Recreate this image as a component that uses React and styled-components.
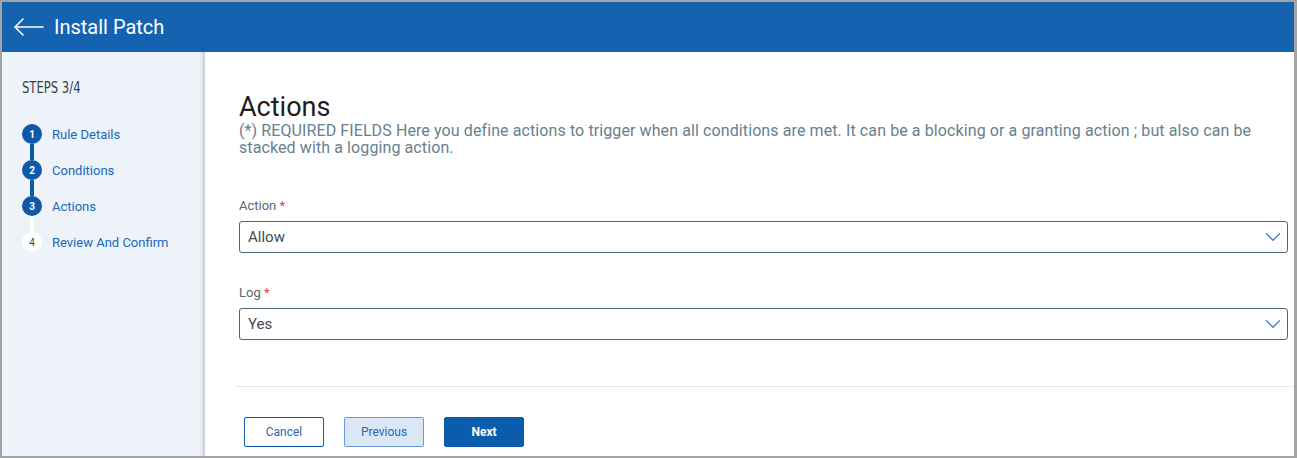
import React from 'react';
import styled, { createGlobalStyle } from 'styled-components';
import { ChevronDown } from 'lucide-react';

const GlobalStyle = createGlobalStyle`
  body {
    margin: 0;
    font-family: Roboto, "Liberation Sans", sans-serif;
    background: #ffffff;
  }
  * { box-sizing: border-box; }
`;

// Styled Components
const Frame = styled.div`
  width: 1297px;
  height: 458px;
  border: 2px solid #a3a3a3;
  border-right-width: 3px;
  display: flex;
  flex-direction: column;
  overflow: hidden;
`;

const Header = styled.header`
  height: 50px;
  flex-shrink: 0;
  background-color: #1562b0;
  display: flex;
  align-items: center;
  padding-left: 11px;
  gap: 9px;
  color: #ffffff;
`;

const BackButton = styled.button`
  border: none;
  background: none;
  padding: 0;
  display: flex;
  color: #ffffff;
  cursor: pointer;
`;

const HeaderTitle = styled.h1`
  margin: 0;
  font-size: 20px;
  font-weight: 400;
`;

const Body = styled.div`
  flex: 1;
  display: flex;
  min-height: 0;
`;

const Sidebar = styled.aside`
  width: 203px;
  flex-shrink: 0;
  background-color: #eef3fa;
  box-shadow: inset -5px 0 4px -3px rgba(0, 0, 0, 0.18);
  padding: 27px 0 0 20px;
`;

const StepsTitle = styled.div`
  font-family: "DejaVu Sans Condensed", Roboto, sans-serif;
  font-stretch: condensed;
  font-size: 15px;
  color: #3a3f44;
  transform: scaleX(0.86);
  transform-origin: left center;
  margin-bottom: 27px;
`;

const StepList = styled.ol`
  list-style: none;
  margin: 0;
  padding: 0;
  display: flex;
  flex-direction: column;
  gap: 16px;
`;

const StepItem = styled.li`
  display: flex;
  align-items: center;
  gap: 10px;
  height: 20px;
`;

const StepCircle = styled.span`
  position: relative;
  width: 20px;
  height: 20px;
  border-radius: 50%;
  background-color: ${(p) => (p.$done ? '#0e5aa8' : '#ffffff')};
  color: ${(p) => (p.$done ? '#ffffff' : '#444444')};
  font-size: 10px;
  font-weight: ${(p) => (p.$done ? 700 : 400)};
  display: flex;
  align-items: center;
  justify-content: center;
  flex-shrink: 0;

  &::after {
    content: '';
    display: ${(p) => (p.$last ? 'none' : 'block')};
    position: absolute;
    top: 20px;
    left: 8px;
    width: 4px;
    height: 16px;
    background-color: ${(p) => (p.$lineDone ? '#0e5aa8' : '#ffffff')};
  }
`;

const StepLabel = styled.span`
  font-size: 13px;
  color: #1a66bd;
`;

const Content = styled.main`
  flex: 1;
  display: flex;
  flex-direction: column;
  padding-left: 30px;
  min-width: 0;
`;

const Form = styled.div`
  padding: 40px 6px 0 4px;
  height: 335px;
  border-bottom: 1px solid #e6e8ea;
`;

const Title = styled.h2`
  margin: 0;
  font-size: 27px;
  font-weight: 400;
  color: #1d1d1d;
  line-height: 30px;
`;

const Description = styled.p`
  margin: 0 0 42px;
  font-size: 16px;
  letter-spacing: 0.1px;
  line-height: 17px;
  color: #687f8e;
  padding-right: 20px;
`;

const Field = styled.div`
  margin-bottom: 32px;
`;

const Label = styled.label`
  display: block;
  font-size: 13px;
  color: #5b6670;
  margin-bottom: 8px;

  span {
    color: #e2463b;
  }
`;

const SelectBox = styled.div`
  height: 32px;
  border: 1px solid #4c6675;
  border-radius: 3px;
  display: flex;
  align-items: center;
  justify-content: space-between;
  padding: 0 1px 0 8px;
  font-size: 15px;
  color: #404a52;
  background: #ffffff;

  svg {
    color: #3b7fd1;
  }
`;

const Footer = styled.div`
  display: flex;
  gap: 20px;
  padding: 30px 0 0 9px;
`;

const Button = styled.button`
  width: 80px;
  height: 30px;
  border-radius: 2px;
  font-family: Roboto, "Liberation Sans", sans-serif;
  font-size: 12px;
  cursor: pointer;
  border: 1px solid ${(p) => (p.$variant === 'secondary' ? '#6b9ad4' : '#0b5cad')};
  background-color: ${(p) =>
    p.$variant === 'primary' ? '#0b5cad' : p.$variant === 'secondary' ? '#dbe7f5' : '#ffffff'};
  color: ${(p) => (p.$variant === 'primary' ? '#ffffff' : '#2a68b4')};
  font-weight: ${(p) => (p.$variant === 'primary' ? 700 : 400)};
`;

const steps = ['Rule Details', 'Conditions', 'Actions', 'Review And Confirm'];
const current = 3;

const App = () => {
  return (
    <>
      <GlobalStyle />
      <Frame>
        <Header>
          <BackButton aria-label="Back">
            <svg width="32" height="20" viewBox="0 0 32 20" fill="none" stroke="currentColor" strokeWidth="1.6" strokeLinecap="round" strokeLinejoin="round">
              <line x1="2" y1="10" x2="30" y2="10" />
              <polyline points="10,2 2,10 10,18" />
            </svg>
          </BackButton>
          <HeaderTitle>Install Patch</HeaderTitle>
        </Header>

        <Body>
          <Sidebar>
            <StepsTitle>STEPS 3/4</StepsTitle>
            <StepList>
              {steps.map((step, i) => (
                <StepItem key={step}>
                  <StepCircle
                    $done={i + 1 <= current}
                    $lineDone={i + 2 <= current}
                    $last={i === steps.length - 1}
                  >
                    {i + 1}
                  </StepCircle>
                  <StepLabel>{step}</StepLabel>
                </StepItem>
              ))}
            </StepList>
          </Sidebar>

          <Content>
            <Form>
              <Title>Actions</Title>
              <Description>
                (*) REQUIRED FIELDS Here you define actions to trigger when all conditions are met. It can be a blocking or a granting action ; but also can be stacked with a logging action.
              </Description>

              <Field>
                <Label>Action <span>*</span></Label>
                <SelectBox>
                  Allow
                  <ChevronDown size={26} strokeWidth={1.15} />
                </SelectBox>
              </Field>

              <Field>
                <Label>Log <span>*</span></Label>
                <SelectBox>
                  Yes
                  <ChevronDown size={26} strokeWidth={1.15} />
                </SelectBox>
              </Field>
            </Form>

            <Footer>
              <Button>Cancel</Button>
              <Button $variant="secondary">Previous</Button>
              <Button $variant="primary">Next</Button>
            </Footer>
          </Content>
        </Body>
      </Frame>
    </>
  );
};

export default App;
